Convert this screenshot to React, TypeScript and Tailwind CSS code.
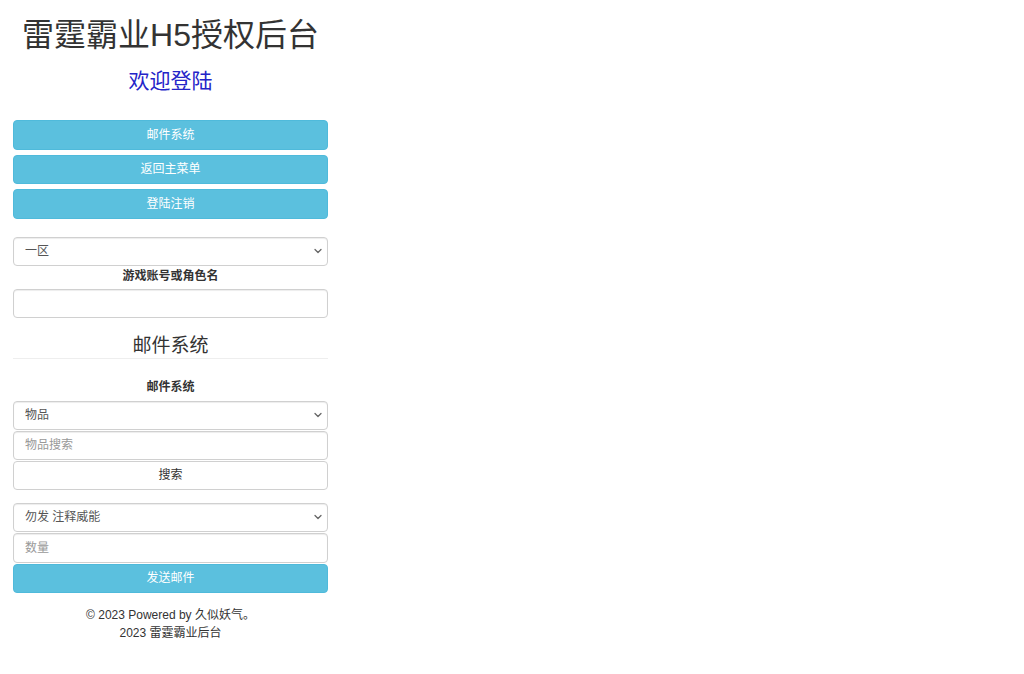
import { ReactNode } from 'react';

const font = "font-['Liberation_Sans','Noto_Sans_CJK_SC',sans-serif]";

function Chevron() {
  return (
    <svg className="absolute right-[6px] top-1/2 -translate-y-1/2 pointer-events-none" width="8" height="6" viewBox="0 0 8 6" fill="none">
      <path d="M1 1.5l3 3 3-3" stroke="#666" strokeWidth="1.3" strokeLinecap="round" strokeLinejoin="round" />
    </svg>
  );
}

function Select({ value, className = '' }: { value: string; className?: string }) {
  return (
    <div className={`relative ${className}`}>
      <select
        defaultValue={value}
        className="appearance-none w-full h-[29.5px] pl-[11px] pr-6 text-[12px] text-[#555] bg-white border border-[#d0d0d0] rounded-[4px] shadow-[inset_0_1px_1px_rgba(0,0,0,0.075)] outline-none"
      >
        <option>{value}</option>
      </select>
      <Chevron />
    </div>
  );
}

function Input({ placeholder = '', className = '' }: { placeholder?: string; className?: string }) {
  return (
    <input
      placeholder={placeholder}
      className={`block w-full h-[29.5px] px-[11px] text-[12px] text-[#555] placeholder:text-[#999] bg-white border border-[#d0d0d0] rounded-[4px] shadow-[inset_0_1px_1px_rgba(0,0,0,0.075)] outline-none ${className}`}
    />
  );
}

function InfoButton({ children, className = '' }: { children: ReactNode; className?: string }) {
  return (
    <button className={`block w-full h-[29.5px] text-[12px] text-white bg-[#5bc0de] border border-[#4fbadb] rounded-[4px] ${className}`}>
      {children}
    </button>
  );
}

export default function App() {
  return (
    <div className={`w-[315px] ml-[13px] text-[#333] ${font}`}>
      {/* 标题 */}
      <h1 className="pt-[17px] text-center text-[32px] leading-[36px] text-[#333]">雷霆霸业H5授权后台</h1>
      <h3 className="mt-[16px] text-center text-[21px] leading-[24px] text-[#2424c8]">欢迎登陆</h3>

      {/* 菜单按钮 */}
      <div className="mt-[27px] flex flex-col gap-[5px]">
        <InfoButton>邮件系统</InfoButton>
        <InfoButton>返回主菜单</InfoButton>
        <InfoButton>登陆注销</InfoButton>
      </div>

      {/* 区服与账号 */}
      <Select value="一区" className="mt-[18px]" />
      <label className="block mt-[1px] text-center text-[12px] leading-[18px] font-bold">游戏账号或角色名</label>
      <Input className="mt-[3.5px]" />

      {/* 邮件系统 */}
      <h4 className="mt-[18px] text-center text-[19px] leading-[20px] pb-[1.5px] border-b border-[#eee]">邮件系统</h4>
      <label className="block mt-[19px] text-center text-[12px] leading-[18px] font-bold">邮件系统</label>
      <Select value="物品" className="mt-[5px]" />
      <Input placeholder="物品搜索" className="mt-[0.5px]" />
      <button className="block w-full h-[29.5px] mt-[0.5px] text-[12px] text-[#333] bg-white border border-[#d0d0d0] rounded-[4px]">搜索</button>

      <Select value="勿发 注释威能" className="mt-[12.5px]" />
      <Input placeholder="数量" className="mt-[1px]" />
      <InfoButton className="mt-[1px]">发送邮件</InfoButton>

      {/* 页脚 */}
      <footer className="mt-[13px] text-center text-[12px] leading-[18px] text-[#333]">
        <p>© 2023 Powered by 久似妖气。</p>
        <p>2023 雷霆霸业后台</p>
      </footer>
    </div>
  );
}
